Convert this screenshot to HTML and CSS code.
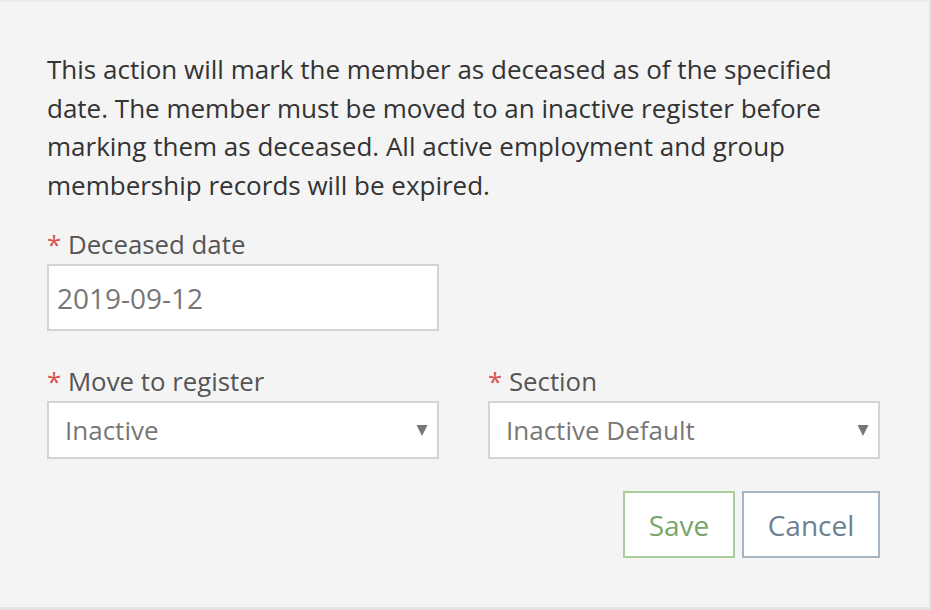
FILE: index.html
```html
<!DOCTYPE html>
<html>
<head>
<meta charset="utf-8">
<link rel="stylesheet" href="styles.css">
</head>
<body>
<div class="panel">
  <p class="intro">This action will mark the member as deceased as of the specified date. The member must be moved to an inactive register before marking them as deceased. All active employment and group membership records will be expired.</p>
  <div class="field">
    <label class="label"><span class="req">*</span> Deceased date</label>
    <div class="input date">2019-09-12</div>
  </div>
  <div class="row">
    <div class="field">
      <label class="label"><span class="req">*</span> Move to register</label>
      <div class="input select"><span>Inactive</span>
        <svg class="caret" width="12" height="12" viewBox="0 0 12 12"><path d="M0.5 1 L11.5 1 L6 12 Z" fill="#777"/></svg>
      </div>
    </div>
    <div class="field">
      <label class="label"><span class="req">*</span> Section</label>
      <div class="input select"><span>Inactive Default</span>
        <svg class="caret" width="12" height="12" viewBox="0 0 12 12"><path d="M0.5 1 L11.5 1 L6 12 Z" fill="#777"/></svg>
      </div>
    </div>
  </div>
  <div class="actions">
    <button class="btn save">Save</button>
    <button class="btn cancel">Cancel</button>
  </div>
</div>
</body>
</html>
```

FILE: styles.css
```css
html, body {
  margin: 0;
  padding: 0;
}
body {
  background: #e4e4e4;
  width: 931px;
  height: 610px;
  overflow: hidden;
  font-family: "Open Sans", "DejaVu Sans", sans-serif;
}
.panel {
  box-sizing: border-box;
  width: 929px;
  height: 607px;
  background: #f4f4f4;
  border-top: 2px solid #ebebeb;
  padding: 48px 49px 0 47px;
  display: flex;
  flex-direction: column;
}
.intro {
  margin: 0;
  width: 800px;
  font-size: 26px;
  line-height: 38.5px;
  color: #333;
}
.field {
  display: flex;
  flex-direction: column;
  width: 392px;
}
.intro + .field {
  margin-top: 22px;
}
.label {
  font-size: 25.8px;
  line-height: 36px;
  height: 38px;
  color: #555;
}
.req {
  color: #d9534f;
}
.input {
  box-sizing: border-box;
  background: #fff;
  border: 2px solid #d4d4d4;
  color: #777;
  display: flex;
  align-items: center;
}
.date {
  height: 67px;
  padding-left: 8px;
  font-size: 28px;
}
.select {
  height: 58px;
  padding: 0 9px 0 16px;
  justify-content: space-between;
  font-size: 26px;
}
.caret {
  display: block;
}
.row {
  display: flex;
  gap: 49px;
  margin-top: 32px;
}
.actions {
  display: flex;
  justify-content: flex-end;
  gap: 7px;
  margin-top: 32px;
  width: 833px;
}
.btn {
  box-sizing: border-box;
  height: 67px;
  background: #fff;
  font-family: "Open Sans", "DejaVu Sans", sans-serif;
  font-size: 28px;
  border: 2px solid;
  padding: 0;
  margin: 0;
}
.save {
  width: 112px;
  color: #78a66a;
  border-color: #a8cc9c;
}
.cancel {
  width: 138px;
  color: #6d7f93;
  border-color: #a6b5c3;
}
```
